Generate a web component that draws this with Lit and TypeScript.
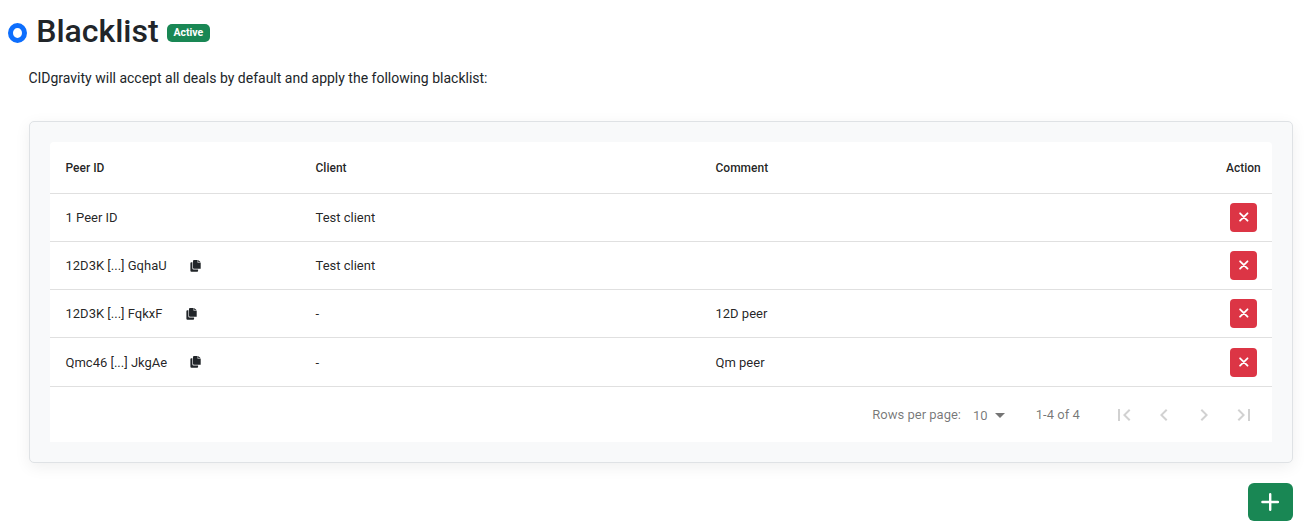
import { LitElement, html, css, svg, nothing } from "lit";
import { customElement } from "lit/decorators.js";

interface Row {
  peer: string;
  client: string;
  comment: string;
  copy: boolean;
}

const ROWS: Row[] = [
  { peer: "1 Peer ID", client: "Test client", comment: "", copy: false },
  { peer: "12D3K [...] GqhaU", client: "Test client", comment: "", copy: true },
  { peer: "12D3K [...] FqkxF", client: "-", comment: "12D peer", copy: true },
  { peer: "Qmc46 [...] JkgAe", client: "-", comment: "Qm peer", copy: true },
];

const PAGER = [
  { label: "First page", d: svg`<path d="M18.41 16.59L13.82 12l4.59-4.59L17 6l-6 6 6 6zM6 6h2v12H6z"/>` },
  { label: "Previous page", d: svg`<path d="M15.41 7.41L14 6l-6 6 6 6 1.41-1.41L10.83 12z"/>` },
  { label: "Next page", d: svg`<path d="M10 6L8.59 7.41 13.17 12l-4.58 4.59L10 18l6-6z"/>` },
  { label: "Last page", d: svg`<path d="M5.59 7.41L10.18 12l-4.59 4.59L7 18l6-6-6-6zM16 6h2v12h-2z"/>` },
];

@customElement("app-root")
export class AppRoot extends LitElement {
  static styles = css`
    :host {
      display: block;
      box-sizing: border-box;
      height: 529px;
      overflow: hidden;
      padding: 11px 11px 0 8px;
      background: #fff;
      color: #212529;
      font-family: Roboto, "Liberation Sans", sans-serif;
      font-size: 14px;
    }
    * { box-sizing: border-box; }
    svg { display: block; }
    button { border: 0; padding: 0; font: inherit; display: flex; align-items: center; justify-content: center; }
    .title { display: flex; height: 40px; align-items: center; }
    .ring { width: 19px; height: 20px; margin-top: 4px; border: 5.5px solid #0d6efd; border-radius: 50%; }
    h1 { margin: 0 0 0 9.2px; font-size: 32px; line-height: 40px; font-weight: 500; }
    .badge {
      margin: 3px 0 0 8.4px; height: 18px; padding: 0 6.5px; border-radius: 5px;
      background: #198754; color: #fff; font-size: 10.5px; font-weight: 700; line-height: 18px;
    }
    .intro { margin: 17px 0 0 20.4px; line-height: 21px; }
    .card {
      margin: 32px 0 0 21px; height: 342px; padding: 20px;
      border: 1px solid #dfe2e5; border-radius: 5px; background: #f8f9fa;
      box-shadow: 0 4px 16px rgba(0, 0, 0, .065);
    }
    .table { height: 300px; background: #fff; border-radius: 4px 4px 0 0; font-size: 13px; color: rgba(0, 0, 0, .87); }
    .row {
      display: grid; grid-template-columns: 250px 400px 1fr 57px; align-items: center;
      height: 48px; border-bottom: 1px solid rgba(0, 0, 0, .12);
    }
    .row.last { height: 49px; }
    .head { height: 52px; font-size: 12px; font-weight: 500; }
    .cell { display: flex; align-items: center; padding-left: 15.5px; }
    .head .action { padding-left: 11px; }
    .action { padding-left: 15px; }
    .copy { margin-left: 23.2px; width: 11px; height: 12px; fill: #212529; }
    .remove { width: 27px; height: 29px; padding: 0 0 1px 0; border-radius: 4px; background: #dc3545; }
    .footer {
      display: flex; height: 55px; align-items: center; justify-content: flex-end;
      padding-right: 8px; color: rgba(0, 0, 0, .54);
    }
    .size { display: flex; align-items: center; margin-left: 12px; padding-top: 1px; }
    .range { margin: 0 24.3px 0 24.2px; }
    .pager { display: flex; }
    .pager button { width: 40px; height: 40px; background: none; }
    .pager svg { fill: rgba(0, 0, 0, .18); }
    .bottom { display: flex; justify-content: flex-end; margin-top: 20px; }
    .add { width: 45px; height: 38px; padding: 0 1px 1px 0; border-radius: 6px; background: #198754; }
  `;

  private renderRow(r: Row, last: boolean) {
    return html`<div class="row ${last ? "last" : ""}">
      <div class="cell">
        <span>${r.peer}</span>
        ${r.copy
          ? html`<svg class="copy" viewBox="0 0 11 12"><path d="M4 0h3.6v2.8h3.1v6H4a1 1 0 0 1-1-1V1a1 1 0 0 1 1-1zM8.2 0l2.5 2.3H8.2z"/><path d="M1.4 2.3h1v6.2a1 1 0 0 0 1 1h4.7v1.3a1 1 0 0 1-1 1H1.4a1 1 0 0 1-1-1V3.3a1 1 0 0 1 1-1z"/></svg>`
          : nothing}
      </div>
      <div class="cell">${r.client}</div>
      <div class="cell">${r.comment}</div>
      <div class="cell action">
        <button class="remove" aria-label="Remove">
          <svg width="10" height="10" viewBox="0 0 10 10"><path d="M1.1 1.3l7.4 7.4M8.5 1.3L1.1 8.7" stroke="#fff" stroke-width="1.8" stroke-linecap="round"/></svg>
        </button>
      </div>
    </div>`;
  }

  render() {
    return html`
      <div class="title"><span class="ring"></span><h1>Blacklist</h1><span class="badge">Active</span></div>
      <div class="intro">CIDgravity will accept all deals by default and apply the following blacklist:</div>
      <div class="card">
        <div class="table">
          <div class="row head">
            <div class="cell">Peer ID</div>
            <div class="cell">Client</div>
            <div class="cell">Comment</div>
            <div class="cell action">Action</div>
          </div>
          ${ROWS.map((r, i) => this.renderRow(r, i === ROWS.length - 1))}
          <div class="footer">
            <span>Rows per page:</span>
            <span class="size">10<svg width="24" height="24" viewBox="0 0 24 24" fill="#757575"><path d="M7 10l5 5 5-5z"/></svg></span>
            <span class="range">1-4 of 4</span>
            <div class="pager">
              ${PAGER.map((p) => html`<button aria-label=${p.label}><svg width="24" height="24" viewBox="0 0 24 24">${p.d}</svg></button>`)}
            </div>
          </div>
        </div>
      </div>
      <div class="bottom">
        <button class="add" aria-label="Add">
          <svg width="18" height="18" viewBox="0 0 18 18"><path d="M9.2 1.2v15.6M1.4 9h15.6" stroke="#fff" stroke-width="2.4" stroke-linecap="round"/></svg>
        </button>
      </div>`;
  }
}
